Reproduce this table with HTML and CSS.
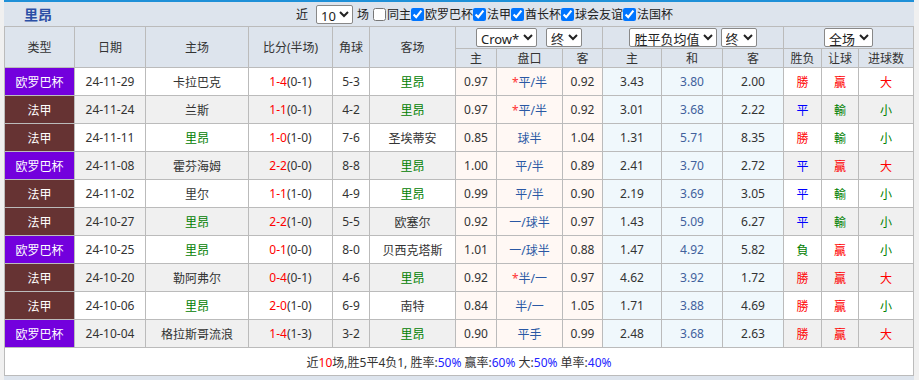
FILE: index.html
```html
<!DOCTYPE html>
<html lang="zh">
<head>
    <meta charset="UTF-8">
    <title>里昂 近期战绩</title>
    <link rel="stylesheet" href="styles.css">
</head>
<body>
    <div class="panel">
        <div class="bar">
            <span class="title">里昂</span>
            <div class="filters">
                <span>近</span>
                <select class="sel num"><option>10</option></select>
                <span>场</span>
                <label class="first"><input type="checkbox">同主</label>
                <label><input type="checkbox" checked>欧罗巴杯</label>
                <label><input type="checkbox" checked>法甲</label>
                <label><input type="checkbox" checked>酋长杯</label>
                <label><input type="checkbox" checked>球会友谊</label>
                <label><input type="checkbox" checked>法国杯</label>
            </div>
        </div>

        <table class="list">
            <colgroup>
                <col style="width:70px"><col style="width:71px"><col style="width:103px"><col style="width:84px"><col style="width:37px"><col style="width:86px">
                <col style="width:41px"><col style="width:66px"><col style="width:40px">
                <col style="width:59px"><col style="width:61px"><col style="width:61px">
                <col style="width:38px"><col style="width:37px"><col style="width:55px">
            </colgroup>
            <thead>
                <tr class="head-top">
                    <th rowspan="2">类型</th>
                    <th rowspan="2">日期</th>
                    <th rowspan="2">主场</th>
                    <th rowspan="2">比分(半场)</th>
                    <th rowspan="2">角球</th>
                    <th rowspan="2">客场</th>
                    <th colspan="3"><select class="sel crow"><option>Crow*</option></select> <select class="sel"><option>终</option></select></th>
                    <th colspan="3"><select class="sel"><option>胜平负均值</option></select> <select class="sel"><option>终</option></select></th>
                    <th colspan="3"><select class="sel"><option>全场</option></select></th>
                </tr>
                <tr class="head-sub">
                    <th>主</th><th>盘口</th><th>客</th>
                    <th>主</th><th>和</th><th>客</th>
                    <th>胜负</th><th>让球</th><th>进球数</th>
                </tr>
            </thead>
            <tbody>
                <tr>
                    <td class="cup el">欧罗巴杯</td><td>24-11-29</td><td>卡拉巴克</td>
                    <td><span class="ft">1-4</span>(0-1)</td><td>5-3</td><td class="us">里昂</td>
                    <td class="ah">0.97</td><td class="ah line"><i>*</i>平/半</td><td class="ah">0.92</td>
                    <td class="ep">3.43</td><td class="ep dr">3.80</td><td class="ep">2.00</td>
                    <td class="w">勝</td><td class="w">贏</td><td class="w">大</td>
                </tr>
                <tr>
                    <td class="cup l1">法甲</td><td>24-11-24</td><td>兰斯</td>
                    <td><span class="ft">1-1</span>(0-1)</td><td>4-2</td><td class="us">里昂</td>
                    <td class="ah">0.97</td><td class="ah line"><i>*</i>平/半</td><td class="ah">0.92</td>
                    <td class="ep">3.01</td><td class="ep dr">3.68</td><td class="ep">2.22</td>
                    <td class="d">平</td><td class="l">輸</td><td class="l">小</td>
                </tr>
                <tr>
                    <td class="cup l1">法甲</td><td>24-11-11</td><td class="us">里昂</td>
                    <td><span class="ft">1-0</span>(1-0)</td><td>7-6</td><td>圣埃蒂安</td>
                    <td class="ah">0.85</td><td class="ah line">球半</td><td class="ah">1.04</td>
                    <td class="ep">1.31</td><td class="ep dr">5.71</td><td class="ep">8.35</td>
                    <td class="w">勝</td><td class="l">輸</td><td class="l">小</td>
                </tr>
                <tr>
                    <td class="cup el">欧罗巴杯</td><td>24-11-08</td><td>霍芬海姆</td>
                    <td><span class="ft">2-2</span>(0-0)</td><td>8-8</td><td class="us">里昂</td>
                    <td class="ah">1.00</td><td class="ah line">平/半</td><td class="ah">0.89</td>
                    <td class="ep">2.41</td><td class="ep dr">3.70</td><td class="ep">2.72</td>
                    <td class="d">平</td><td class="w">贏</td><td class="w">大</td>
                </tr>
                <tr>
                    <td class="cup l1">法甲</td><td>24-11-02</td><td>里尔</td>
                    <td><span class="ft">1-1</span>(1-0)</td><td>4-9</td><td class="us">里昂</td>
                    <td class="ah">0.99</td><td class="ah line">平/半</td><td class="ah">0.90</td>
                    <td class="ep">2.19</td><td class="ep dr">3.69</td><td class="ep">3.05</td>
                    <td class="d">平</td><td class="l">輸</td><td class="l">小</td>
                </tr>
                <tr>
                    <td class="cup l1">法甲</td><td>24-10-27</td><td class="us">里昂</td>
                    <td><span class="ft">2-2</span>(1-0)</td><td>5-5</td><td>欧塞尔</td>
                    <td class="ah">0.92</td><td class="ah line">一/球半</td><td class="ah">0.97</td>
                    <td class="ep">1.43</td><td class="ep dr">5.09</td><td class="ep">6.27</td>
                    <td class="d">平</td><td class="l">輸</td><td class="l">小</td>
                </tr>
                <tr>
                    <td class="cup el">欧罗巴杯</td><td>24-10-25</td><td class="us">里昂</td>
                    <td><span class="ft">0-1</span>(0-0)</td><td>8-0</td><td>贝西克塔斯</td>
                    <td class="ah">1.01</td><td class="ah line">一/球半</td><td class="ah">0.88</td>
                    <td class="ep">1.47</td><td class="ep dr">4.92</td><td class="ep">5.82</td>
                    <td class="l">負</td><td class="w">贏</td><td class="l">小</td>
                </tr>
                <tr>
                    <td class="cup l1">法甲</td><td>24-10-20</td><td>勒阿弗尔</td>
                    <td><span class="ft">0-4</span>(0-1)</td><td>4-6</td><td class="us">里昂</td>
                    <td class="ah">0.92</td><td class="ah line"><i>*</i>半/一</td><td class="ah">0.97</td>
                    <td class="ep">4.62</td><td class="ep dr">3.92</td><td class="ep">1.72</td>
                    <td class="w">勝</td><td class="w">贏</td><td class="w">大</td>
                </tr>
                <tr>
                    <td class="cup l1">法甲</td><td>24-10-06</td><td class="us">里昂</td>
                    <td><span class="ft">2-0</span>(1-0)</td><td>6-9</td><td>南特</td>
                    <td class="ah">0.84</td><td class="ah line">半/一</td><td class="ah">1.05</td>
                    <td class="ep">1.71</td><td class="ep dr">3.88</td><td class="ep">4.69</td>
                    <td class="w">勝</td><td class="w">贏</td><td class="l">小</td>
                </tr>
                <tr>
                    <td class="cup el">欧罗巴杯</td><td>24-10-04</td><td>格拉斯哥流浪</td>
                    <td><span class="ft">1-4</span>(1-3)</td><td>3-2</td><td class="us">里昂</td>
                    <td class="ah">0.90</td><td class="ah line">平手</td><td class="ah">0.99</td>
                    <td class="ep">2.48</td><td class="ep dr">3.68</td><td class="ep">2.63</td>
                    <td class="w">勝</td><td class="w">贏</td><td class="w">大</td>
                </tr>
            </tbody>
            <tfoot>
                <tr>
                    <td colspan="15" class="summary">
                        近<span class="red">10</span>场,胜5平4负1, 胜率:<span class="pct">50%</span> 赢率:<span class="pct">60%</span> 大:<span class="pct">50%</span> 单率:<span class="pct">40%</span>
                    </td>
                </tr>
            </tfoot>
        </table>
    </div>
</body>
</html>
```

FILE: styles.css
```css
body {
    margin: 0;
    padding: 0 5px 0 4px;
    background: #f0f0f0;
    font-family: "Noto Sans", "Noto Sans CJK SC", sans-serif;
    font-size: 12px;
    color: #333;
}

.panel {
    background: #dde4ed;
    border-top: 2px solid #1e90d8;
    height: 378px;
}

.bar {
    display: flex;
    align-items: center;
    height: 24px;
}

.title {
    width: 272px;
    padding-left: 20px;
    font-size: 14px;
    font-weight: bold;
    color: #2b4fa6;
}

.filters {
    display: flex;
    align-items: center;
    font-size: 12px;
    color: #222;
    white-space: nowrap;
}

.filters label {
    display: flex;
    align-items: center;
}

.filters label.first {
    margin-left: 4px;
}

.filters input {
    margin: 0 1px 0 0;
    width: 13px;
    height: 13px;
}

.filters .num {
    margin: 0 4px 0 8px;
}

.sel {
    font-family: "Noto Sans", "Noto Sans CJK SC", sans-serif;
    font-size: 13px;
    height: 19px;
    padding: 0;
    color: #222;
    background: #fff;
    border: 1px solid #888;
    border-radius: 2px;
}

.crow {
    margin-right: 6px;
}

.list {
    width: 909px;
    border-collapse: collapse;
    table-layout: fixed;
}

.list th,
.list td {
    border: 1px solid #bbb;
    text-align: center;
    padding: 0;
    white-space: nowrap;
    overflow: hidden;
}

.list th {
    font-weight: normal;
    font-size: 12px;
    color: #333;
}

.head-top th {
    height: 21px;
}

.head-sub th {
    height: 17px;
}

.list tbody tr {
    height: 28px;
    background: #fff;
}

.list tbody tr:nth-child(even) {
    background: #f0f0f0;
}

.list td {
    font-size: 12px;
}

.cup {
    color: #fff;
}

.cup.el {
    background: #7300dd;
}

.cup.l1 {
    background: #663333;
}

.us {
    color: #008000;
}

.ft {
    color: #f00;
}

.list td.ah {
    background: #fff8f4;
}

.list td.ep {
    background: #f0f8fc;
}

.line {
    color: #2a58a4;
}

.line i {
    font-style: normal;
    color: #f33;
}

.dr {
    color: #41619c;
}

.w {
    color: #f00;
}

.d {
    color: #00f;
}

.l {
    color: #008000;
}

.list td.summary {
    height: 27px;
    background: #fff;
    color: #333;
}

.red {
    color: #f00;
}

.pct {
    color: #22f;
}
```
